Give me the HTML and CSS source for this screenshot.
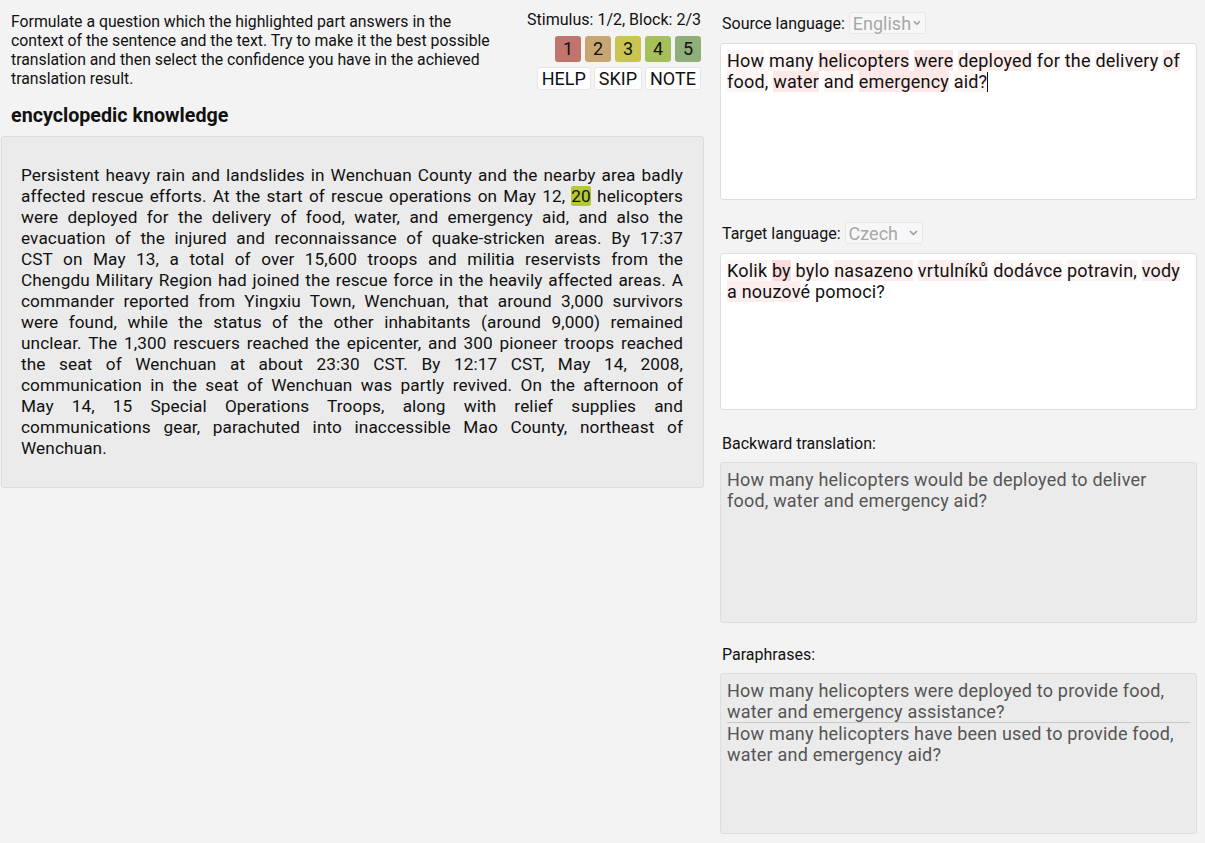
FILE: index.html
```html
<!DOCTYPE html>
<html>
<head>
<meta charset="utf-8">
<link rel="stylesheet" href="styles.css">
</head>
<body>
<div class="page">
  <div class="left">
    <div class="top">
      <div class="instructions">Formulate a question which the highlighted part answers in the context of the sentence and the text. Try to make it the best possible translation and then select the confidence you have in the achieved translation result.</div>
      <div class="controls">
        <div class="stimulus">Stimulus: 1/2, Block: 2/3</div>
        <div class="ratings">
          <button class="rate r1">1</button>
          <button class="rate r2">2</button>
          <button class="rate r3">3</button>
          <button class="rate r4">4</button>
          <button class="rate r5">5</button>
        </div>
        <div class="actions">
          <button class="act">HELP</button>
          <button class="act">SKIP</button>
          <button class="act">NOTE</button>
        </div>
      </div>
    </div>
    <h2 class="topic">encyclopedic knowledge</h2>
    <div class="passage">
      <p><span class="ln">Persistent heavy rain and landslides in Wenchuan County and the nearby area badly</span>
<span class="ln">affected rescue efforts. At the start of rescue operations on May 12, <span class="mark">20</span> helicopters</span>
<span class="ln">were deployed for the delivery of food, water, and emergency aid, and also the</span>
<span class="ln">evacuation of the injured and reconnaissance of quake-stricken areas. By 17:37</span>
<span class="ln">CST on May 13, a total of over 15,600 troops and militia reservists from the</span>
<span class="ln">Chengdu Military Region had joined the rescue force in the heavily affected areas. A</span>
<span class="ln">commander reported from Yingxiu Town, Wenchuan, that around 3,000 survivors</span>
<span class="ln">were found, while the status of the other inhabitants (around 9,000) remained</span>
<span class="ln">unclear. The 1,300 rescuers reached the epicenter, and 300 pioneer troops reached</span>
<span class="ln">the seat of Wenchuan at about 23:30 CST. By 12:17 CST, May 14, 2008,</span>
<span class="ln">communication in the seat of Wenchuan was partly revived. On the afternoon of</span>
<span class="ln">May 14, 15 Special Operations Troops, along with relief supplies and</span>
<span class="ln">communications gear, parachuted into inaccessible Mao County, northeast of</span>
<span class="ln last">Wenchuan.</span></p>
    </div>
  </div>
  <div class="right">
    <div class="section first">
      <div class="label-row">
        <span class="label">Source language:</span>
        <span class="select src">English<svg class="chev" width="9" height="6" viewBox="0 0 9 6"><path d="M1 1 L4.5 4.5 L8 1" fill="none" stroke="#999" stroke-width="1.5"/></svg></span>
      </div>
      <div class="field editable"><span class="h1">How</span> <span class="h1">many</span> <span class="h3">helicopters</span> <span class="h3">were</span> <span class="h2">deployed</span> <span class="h1">for</span> <span class="h1">the</span> <span class="h1">delivery</span> <span class="h2">of</span> <span class="h1">food,</span> <span class="h3">water</span> <span class="h1">and</span> <span class="h3">emergency</span> <span class="h1">aid?</span><span class="caret"></span></div>
    </div>
    <div class="section">
      <div class="label-row">
        <span class="label">Target language:</span>
        <span class="select tgt">Czech<svg class="chev" width="9" height="6" viewBox="0 0 9 6"><path d="M1 1 L4.5 4.5 L8 1" fill="none" stroke="#999" stroke-width="1.5"/></svg></span>
      </div>
      <div class="field editable"><span class="h1">Kolik</span> <span class="h4">by</span> <span class="h1">bylo</span> <span class="h2">nasazeno</span> <span class="h2">vrtulníků</span> <span class="h1">dodávce</span> <span class="h1">potravin,</span> <span class="h2">vody</span> <span class="h2">a nouzov</span>é pomoci?</div>
    </div>
    <div class="section">
      <div class="label-row plain">
        <span class="label">Backward translation:</span>
      </div>
      <div class="field readonly">How many helicopters would be deployed to deliver food, water and emergency aid?</div>
    </div>
    <div class="section last">
      <div class="label-row plain">
        <span class="label">Paraphrases:</span>
      </div>
      <div class="field readonly list">
        <div class="item">How many helicopters were deployed to provide food, water and emergency assistance?</div>
        <div class="item">How many helicopters have been used to provide food, water and emergency aid?</div>
      </div>
    </div>
  </div>
</div>
</body>
</html>
```
FILE: styles.css
```css
* { box-sizing: border-box; }
html, body { margin: 0; padding: 0; }
body {
  background: #f3f3f3;
  font-family: Roboto, "Liberation Sans", sans-serif;
  color: #111;
  width: 1205px;
  height: 843px;
  overflow: hidden;
}
.page {
  display: flex;
  gap: 16px;
  padding-right: 8px;
}
.left {
  width: 704px;
  flex: none;
}
.top {
  display: flex;
  gap: 20px;
  padding: 12px 3px 0 11px;
}
.instructions {
  flex: 1;
  font-size: 15.8px;
  line-height: 19px;
}
.controls {
  flex: none;
  display: flex;
  flex-direction: column;
  align-items: flex-end;
}
.stimulus {
  font-size: 16px;
  line-height: 19px;
  margin-top: -2px;
}
.ratings {
  display: flex;
  gap: 4px;
  margin-top: 7px;
}
button {
  font-family: Roboto, "Liberation Sans", sans-serif;
  color: #111;
  margin: 0;
}
.rate {
  width: 26px;
  height: 26px;
  padding: 0;
  border: none;
  border-radius: 3px;
  font-size: 18px;
  line-height: 26px;
}
.r1 { background: #c1746e; }
.r2 { background: #c8a573; }
.r3 { background: #c8c552; }
.r4 { background: #a5c05a; }
.r5 { background: #8fae7a; }
.actions {
  display: flex;
  gap: 3px;
  margin-top: 5px;
}
.act {
  height: 23px;
  background: #fff;
  border: 1px solid #e6e6e6;
  border-radius: 3px;
  font-size: 18px;
  line-height: 21px;
  padding: 0 4px;
}
.topic {
  margin: 14px 0 8px 11px;
  font-size: 19.7px;
  line-height: 24px;
  font-weight: 700;
}
.passage {
  margin-left: 1px;
  background: #ebebeb;
  border: 1px solid #dcdcdc;
  border-radius: 3px;
  padding: 27.5px 20px 28.5px 19px;
}
.passage p {
  margin: 0;
  font-size: 17.2px;
  letter-spacing: 0.1px;
  line-height: 21px;
  text-align: justify;
}
.ln {
  display: block;
  white-space: nowrap;
  text-align-last: justify;
}
.ln.last {
  text-align-last: left;
}
.mark {
  background: #b6c934;
  border-radius: 2px;
}
.right {
  width: 477px;
  flex: none;
}
.section { margin-top: 22px; }
.section.first { margin-top: 12px; }
.section.last { margin-top: 20px; }
.label-row {
  display: flex;
  align-items: center;
  gap: 4px;
  height: 22px;
  padding-left: 2px;
  margin-bottom: 9px;
}
.label-row.plain { margin-bottom: 8px; }
.label {
  font-size: 16px;
  color: #111;
}
.select {
  display: inline-flex;
  align-items: center;
  justify-content: space-between;
  height: 22px;
  background: #f7f7f7;
  border: 1px solid #e8e8e8;
  border-radius: 3px;
  font-size: 18px;
  color: #a8a8a8;
  padding: 0 4px 0 3px;
}
.select.src { width: 77px; }
.select.tgt { width: 78px; }
.chev { margin-left: 2px; }
.field {
  border: 1px solid #dedede;
  border-radius: 3px;
  padding: 6px;
  font-size: 18px;
  letter-spacing: 0.2px;
  line-height: 21px;
}
.editable {
  background: #fff;
  height: 157px;
  color: #111;
}
.readonly {
  background: #ebebeb;
  height: 161px;
  color: #555;
}
.h1 { background: #fdf4f4; }
.h2 { background: #fdeeee; }
.h3 { background: #fde8e8; }
.h4 { background: #fbdcdc; }
.caret {
  display: inline-block;
  width: 1px;
  height: 20px;
  background: #111;
  vertical-align: -4px;
}
.item + .item {
  border-top: 1px solid #c8c8c8;
}
```
